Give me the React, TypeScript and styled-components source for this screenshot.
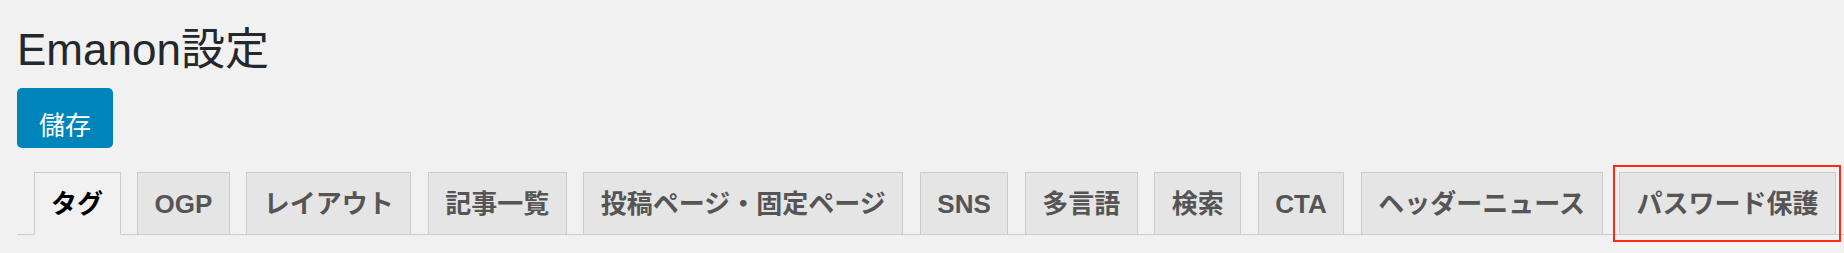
import React from 'react';
import styled, { createGlobalStyle } from 'styled-components';

const GlobalStyle = createGlobalStyle`
  html, body {
    margin: 0;
    padding: 0;
    background: #f1f1f1;
  }
  body {
    font-family: 'Liberation Sans', 'Noto Sans CJK JP', sans-serif;
    color: #23282d;
  }
`;

const Page = styled.div`
  padding: 25px 0 0 17px;
  width: 1844px;
  height: 253px;
  box-sizing: border-box;
  overflow: hidden;
`;

const Title = styled.h1`
  margin: 0;
  padding: 0;
  font-size: 44px;
  line-height: 50px;
  font-weight: 400;
  color: #23282d;
`;

const SaveButton = styled.button`
  display: block;
  margin-top: 13px;
  width: 96px;
  height: 60px;
  padding: 16px 0 0;
  box-sizing: border-box;
  border: none;
  border-radius: 5px;
  background: #0085ba;
  color: #fff;
  font-family: 'Liberation Sans', 'Noto Sans CJK JP', sans-serif;
  font-size: 26px;
  line-height: 40px;
  text-align: center;
  cursor: pointer;
`;

const TabWrapper = styled.nav`
  display: flex;
  align-items: flex-end;
  margin-top: 24px;
  border-bottom: 1px solid #ccc;
`;

const Tab = styled.a<{ $active?: boolean }>`
  position: relative;
  display: flex;
  align-items: center;
  height: 63px;
  box-sizing: border-box;
  margin: 0 0 -1px 16.5px;
  padding: 0 16.5px;
  border: 1px solid #ccc;
  border-bottom-color: ${(p) => (p.$active ? '#f1f1f1' : '#ccc')};
  background: ${(p) => (p.$active ? '#f1f1f1' : '#e5e5e5')};
  color: ${(p) => (p.$active ? '#000' : '#555')};
  font-size: 26px;
  line-height: 44px;
  font-weight: 700;
  white-space: nowrap;
  text-decoration: none;
`;

const Highlight = styled.span`
  position: absolute;
  left: -7px;
  right: -6px;
  top: -8px;
  bottom: -8px;
  border: 2px solid #ff2a12;
  pointer-events: none;
`;

const tabs = [
  'タグ',
  'OGP',
  'レイアウト',
  '記事一覧',
  '投稿ページ・固定ページ',
  'SNS',
  '多言語',
  '検索',
  'CTA',
  'ヘッダーニュース',
  'パスワード保護',
];

export default function App() {
  return (
    <>
      <GlobalStyle />
      <Page>
        <Title>Emanon設定</Title>
        <SaveButton>儲存</SaveButton>
        <TabWrapper>
          {tabs.map((label, i) => (
            <Tab key={label} $active={i === 0}>
              {label}
              {i === tabs.length - 1 && <Highlight />}
            </Tab>
          ))}
        </TabWrapper>
      </Page>
    </>
  );
}
